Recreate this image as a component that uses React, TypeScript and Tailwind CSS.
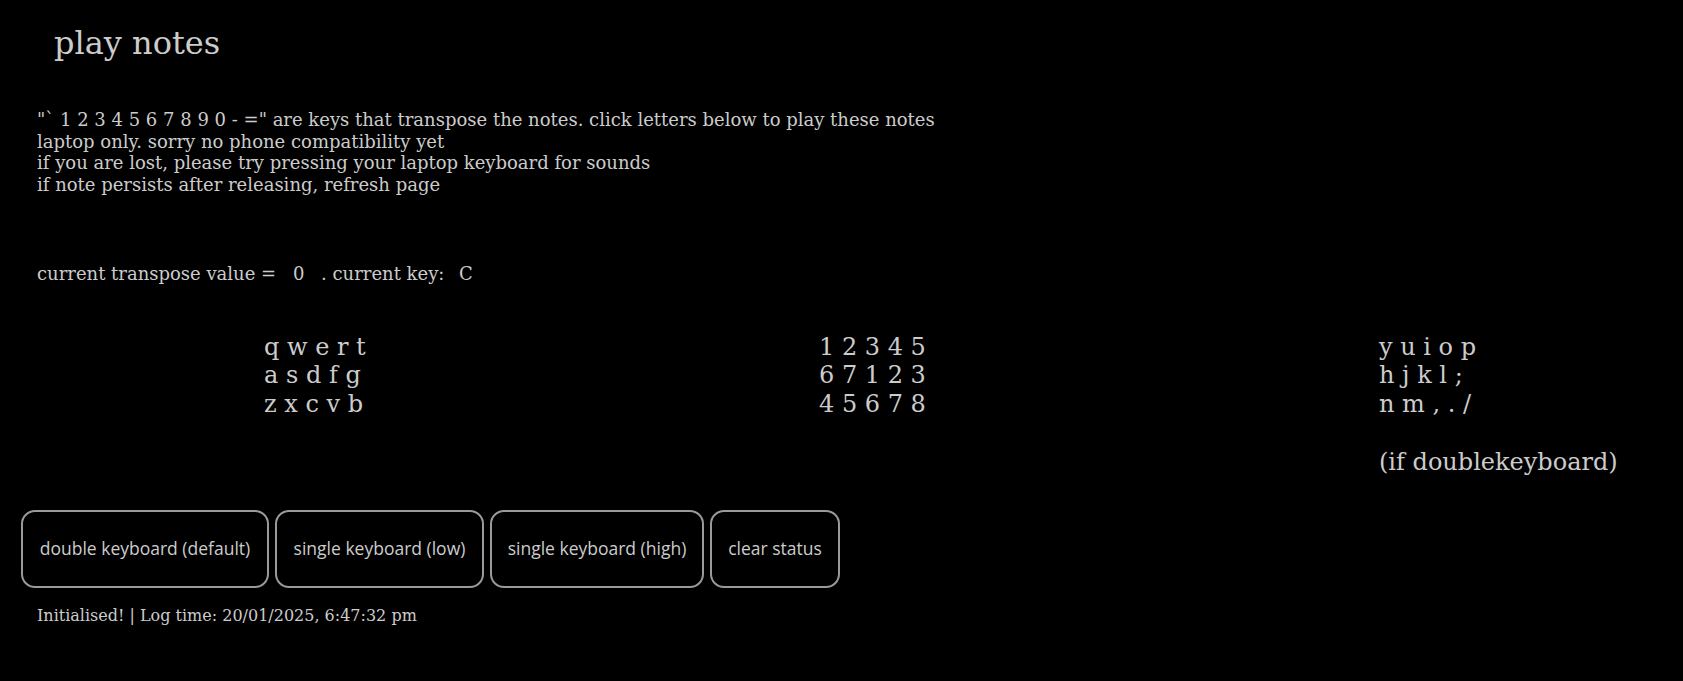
const keyColumns = [
  { rows: ["q w e r t", "a s d f g", "z x c v b"] },
  { rows: ["1 2 3 4 5", "6 7 1 2 3", "4 5 6 7 8"] },
  { rows: ["y u i o p", "h j k l ;", "n m , . /", "\u00a0", "(if doublekeyboard)"] },
];

const modes = [
  { label: "double keyboard (default)", width: "w-[248px]" },
  { label: "single keyboard (low)", width: "w-[209px]" },
  { label: "single keyboard (high)", width: "w-[214px]" },
  { label: "clear status", width: "w-[130px]" },
];

export default function App() {
  return (
    <div className="min-h-screen bg-black text-[#cccccc] font-['DejaVu_Serif',serif]">
      {/* Title */}
      <h1 className="pt-[25px] pl-[54px] text-[32px] font-normal leading-[37px]">play notes</h1>

      {/* Instructions */}
      <div className="mt-[47px] pl-[37px] text-[18px] leading-[21.7px]">
        <div>"` 1 2 3 4 5 6 7 8 9 0 - =" are keys that transpose the notes. click letters below to play these notes</div>
        <div>laptop only. sorry no phone compatibility yet</div>
        <div>if you are lost, please try pressing your laptop keyboard for sounds</div>
        <div>if note persists after releasing, refresh page</div>
      </div>

      {/* Current state */}
      <div className="mt-[67px] pl-[37px] text-[18px] leading-[21.7px]">
        current transpose value = <span className="px-[11px]">0</span> . current key: <span className="pl-[9px]">C</span>
      </div>

      {/* Keyboard map */}
      <div className="mt-[48px] grid grid-cols-[555px_560px_auto] pl-[264px] text-[24px] leading-[28.8px]">
        {keyColumns.map((col, i) => (
          <div key={i}>
            {col.rows.map((row, j) => (
              <div key={j}>{row}</div>
            ))}
          </div>
        ))}
      </div>

      {/* Mode buttons */}
      <div className="mt-[33px] flex gap-[6px] pl-[21px]">
        {modes.map((m) => (
          <button
            key={m.label}
            className={`${m.width} h-[78px] rounded-[14px] border-2 border-[#9a9a9a] bg-black text-[17.5px] text-[#cccccc] font-['Open_Sans',sans-serif]`}
          >
            {m.label}
          </button>
        ))}
      </div>

      {/* Status */}
      <div className="mt-[17px] pl-[37px] text-[16px] leading-[21.6px]">
        Initialised! | Log time: 20/01/2025, 6:47:32 pm
      </div>
    </div>
  );
}
